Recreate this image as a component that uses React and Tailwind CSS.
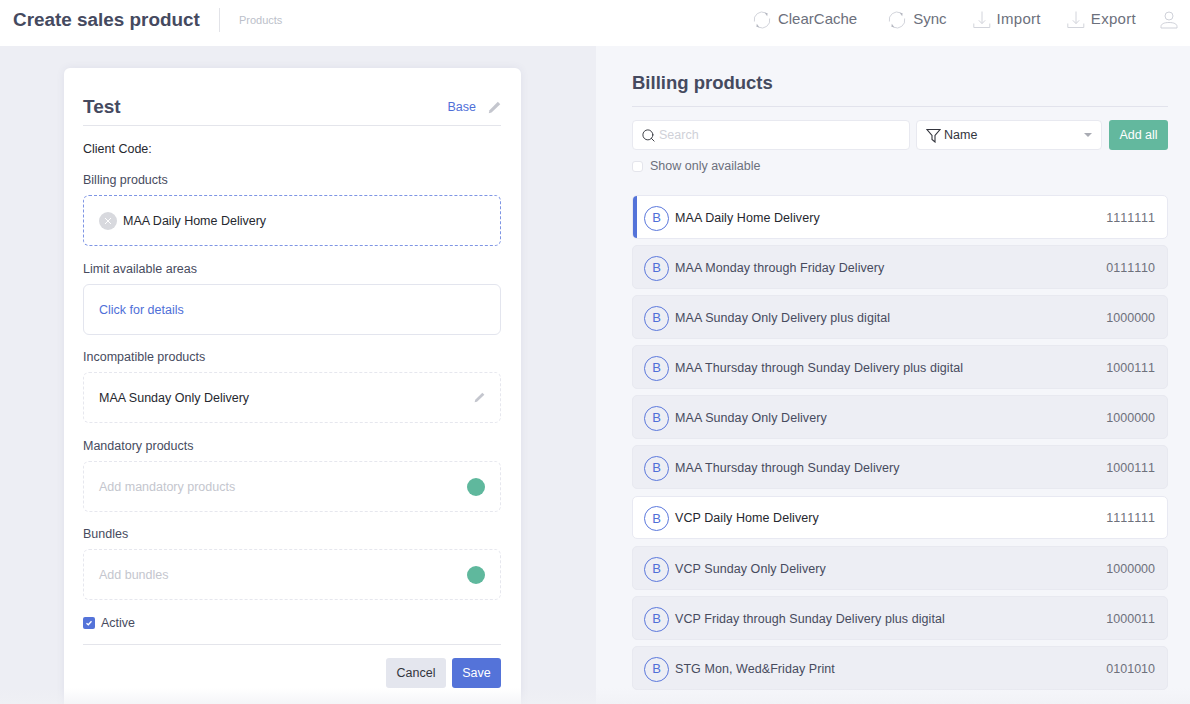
import { Search } from 'lucide-react';

const products = [
  { name: 'MAA Daily Home Delivery', code: '1111111', selected: true, white: true },
  { name: 'MAA Monday through Friday Delivery', code: '0111110' },
  { name: 'MAA Sunday Only Delivery plus digital', code: '1000000' },
  { name: 'MAA Thursday through Sunday Delivery plus digital', code: '1000111' },
  { name: 'MAA Sunday Only Delivery', code: '1000000' },
  { name: 'MAA Thursday through Sunday Delivery', code: '1000111' },
  { name: 'VCP Daily Home Delivery', code: '1111111', white: true, size: 'mt-[1px] h-[43px]' },
  { name: 'VCP Sunday Only Delivery', code: '1000000', size: 'mt-[1px] h-[44px]' },
  { name: 'VCP Friday through Sunday Delivery plus digital', code: '1000011' },
  { name: 'STG Mon, Wed&Friday Print', code: '0101010' },
];

function SyncIcon() {
  return (
    <svg width="18" height="18" viewBox="0 0 18 18" fill="none" stroke="#d2d4db" strokeWidth="1">
      <path d="M12.6 1.9A7.8 7.8 0 0 0 1.4 10.5" />
      <path d="M5.4 16.1A7.8 7.8 0 0 0 16.6 7.5" />
      <path d="M11.5 1.5 14.6 2.2 14.2 5.3Z" fill="#b4b7c0" stroke="none" />
      <path d="M6.5 16.5 3.4 15.8 3.8 12.7Z" fill="#b4b7c0" stroke="none" />
    </svg>
  );
}

function DownIcon() {
  return (
    <svg width="18" height="18" viewBox="0 0 18 18" fill="none" stroke="#d2d4db" strokeWidth="1">
      <path d="M9 0.5V12.5M5.8 9.3 9 12.6 12.2 9.3" />
      <path d="M0.8 12.5V16.5H16.8V12.5" />
    </svg>
  );
}

function UserIcon() {
  return (
    <svg width="18" height="18" viewBox="0 0 18 18" fill="none" stroke="#cfd1d9" strokeWidth="1">
      <circle cx="9" cy="5" r="4" />
      <path d="M1 17V15.5C1 13 4 11.5 9 11.5S17 13 17 15.5V17Z" />
    </svg>
  );
}

function Pencil({ color, size }) {
  return (
    <svg width={size} height={size} viewBox="0 0 14 14" fill={color}>
      <path d="M10.6 0.8 13.2 3.4 3.8 12.4 0.8 13.2 1.6 10Z" />
    </svg>
  );
}

function HeaderAction({ icon, label, wide, className }) {
  return (
    <div className={`flex items-center ${wide ? 'gap-[6px]' : 'gap-[7px]'} ${className}`}>
      {icon}
      <span className={`text-[15px] text-[#6c707c] -translate-y-px ${wide ? 'tracking-[0.3px]' : ''}`}>{label}</span>
    </div>
  );
}

function Field({ label, children, dashed, active, mt }) {
  return (
    <>
      <div className={`h-[20px] ${mt} mb-[5px] text-[12.5px] leading-[20px] text-[#474b5e]`}>{label}</div>
      <div className={`h-[51px] rounded-[6px] px-[15px] flex items-center justify-between text-[12.5px]
        ${active ? 'border border-dashed border-[#7e95e4]' : dashed ? 'border border-dashed border-[#e6e7ee]' : 'border border-[#e3e5ee]'}`}>
        {children}
      </div>
    </>
  );
}

function ProductRow({ p }) {
  return (
    <div className={`relative ${p.size ?? 'h-[44px]'} shrink-0 rounded-[5px] border flex items-center overflow-hidden pl-[11px] pr-[12px] pt-[2px]
      ${p.white ? 'bg-white border-[#e8e9f2]' : 'bg-[#edeef4] border-[#e8e9f0]'}`}>
      {p.selected && <div className="absolute left-0 top-0 bottom-0 w-[4px] bg-[#5473d9]" />}
      <div className="w-[25px] h-[25px] rounded-full border border-[#5b78dc] flex items-center justify-center text-[13px] text-[#4f6fd8]">B</div>
      <span className={`ml-[6px] text-[12.5px] tracking-[0.07px] ${p.white ? 'text-[#26282f]' : 'text-[#474b5e]'}`}>{p.name}</span>
      <span className="ml-auto text-[12.5px] text-[#6e717c] [font-kerning:none]">{p.code}</span>
    </div>
  );
}

export default function App() {
  return (
    <div className="relative w-[1190px] h-[704px] overflow-hidden flex flex-col bg-white font-['Liberation_Sans',sans-serif]">
      {/* Top bar */}
      <header className="h-[46px] shrink-0 bg-white flex items-center pl-[13px] pr-[12px] pb-[6px]">
        <h1 className="text-[18.9px] font-bold text-[#454a5f]">Create sales product</h1>
        <div className="w-px h-[24px] bg-[#e2e3e8] ml-[19px] mr-[19px]" />
        <span className="text-[11px] text-[#bcbfca]">Products</span>
        <div className="ml-auto flex items-center">
          <HeaderAction icon={<SyncIcon />} label="ClearCache" />
          <HeaderAction icon={<SyncIcon />} label="Sync" className="ml-[31px]" />
          <HeaderAction icon={<DownIcon />} label="Import" wide className="ml-[26px]" />
          <HeaderAction icon={<DownIcon />} label="Export" wide className="ml-[26px]" />
          <div className="ml-[24px] flex"><UserIcon /></div>
        </div>
      </header>

      <div className="flex flex-1 min-h-0">
        {/* Left pane */}
        <div className="w-[596px] shrink-0 bg-[#edeef4] pl-[64px] pt-[22px]">
          <div className="w-[457px] h-[700px] bg-white rounded-t-[6px] pl-[19px] pr-[20px] pt-[27px] shadow-[0_0_8px_rgba(60,70,110,0.08)]">
            <div className="flex items-center justify-between h-[24px] mb-[6px]">
              <h2 className="text-[19px] font-bold text-[#454a5f]">Test</h2>
              <div className="flex items-center gap-[12px]">
                <span className="text-[12.5px] text-[#4f6fd8]">Base</span>
                <Pencil color="#c4c6ce" size={13} />
              </div>
            </div>
            <div className="h-px bg-[#e4e5eb]" />
            <div className="mt-[13px] h-[20px] text-[12.5px] leading-[20px] text-[#26282f]">Client Code:</div>

            <Field label="Billing products" active mt="mt-[11px]">
              <div className="flex items-center gap-[6px]">
                <div className="w-[18px] h-[18px] rounded-full bg-[#d8d9de] flex items-center justify-center">
                  <svg width="8" height="8" viewBox="0 0 8 8" stroke="#fff" strokeWidth="1"><path d="M1 1 7 7M7 1 1 7" /></svg>
                </div>
                <span className="pt-[2px] text-[#26282f]">MAA Daily Home Delivery</span>
              </div>
            </Field>

            <Field label="Limit available areas" mt="mt-[13px]">
              <span className="pt-[2px] text-[#4f6fd8]">Click for details</span>
            </Field>

            <Field label="Incompatible products" dashed mt="mt-[12px]">
              <span className="pt-[2px] text-[#26282f]">MAA Sunday Only Delivery</span>
              <Pencil color="#c4c6ce" size={11} />
            </Field>

            <Field label="Mandatory products" dashed mt="mt-[13px]">
              <span className="pt-[2px] text-[#c4c6ce]">Add mandatory products</span>
              <div className="w-[18px] h-[18px] rounded-full bg-[#5fb89d]" />
            </Field>

            <Field label="Bundles" dashed mt="mt-[12px]">
              <span className="pt-[2px] text-[#c4c6ce]">Add bundles</span>
              <div className="w-[18px] h-[18px] rounded-full bg-[#5fb89d]" />
            </Field>

            <div className="mt-[13px] h-[20px] flex items-center gap-[6px] text-[12.5px] text-[#474b5e]">
              <div className="w-[12px] h-[12px] rounded-[2px] bg-[#5473d9] flex items-center justify-center">
                <svg width="8" height="8" viewBox="0 0 8 8" fill="none" stroke="#fff" strokeWidth="1.3"><path d="M1.5 4.2 3.3 5.8 6.5 2.2" /></svg>
              </div>
              Active
            </div>

            <div className="mt-[11px] h-px bg-[#e4e5eb]" />
            <div className="mt-[13px] flex justify-end gap-[6px]">
              <button className="w-[60px] h-[30px] rounded-[3px] bg-[#e4e6ee] text-[12.5px] text-[#33353d]">Cancel</button>
              <button className="w-[49px] h-[30px] rounded-[3px] bg-[#5473d9] text-[12.5px] text-white">Save</button>
            </div>
          </div>
        </div>

        {/* Right pane */}
        <div className="flex-1 min-w-0 bg-[#f5f6fa] pl-[36px] pr-[22px] pt-[24px] flex flex-col">
          <h2 className="h-[26px] text-[18.5px] leading-[26px] font-bold text-[#454a5f]">Billing products</h2>
          <div className="mt-[10px] h-px bg-[#e2e3ec] shrink-0" />
          <div className="mt-[13px] flex gap-[6px]">
            <div className="w-[278px] h-[30px] rounded-[4px] bg-white border border-[#e8e9f0] flex items-center pl-[8px] gap-[3px]">
              <Search size={15} strokeWidth={1.5} className="text-[#33353d]" />
              <span className="text-[12.5px] text-[#cfd1d8]">Search</span>
            </div>
            <div className="w-[186px] h-[30px] rounded-[4px] bg-white border border-[#e8e9f0] flex items-center pl-[9px] pr-[9px] gap-[3px]">
              <svg width="15" height="15" viewBox="0 0 15 15" fill="none" stroke="#33353d" strokeWidth="1.1">
                <path d="M1 1.5H14L9 7.5V14L6 11.5V7.5Z" />
              </svg>
              <span className="text-[12.5px] text-[#33353d]">Name</span>
              <div className="ml-auto w-0 h-0 border-x-[4px] border-x-transparent border-t-[4px] border-t-[#a9abb3]" />
            </div>
            <button className="w-[59px] h-[30px] ml-px rounded-[3px] bg-[#63b89e] text-[12.5px] text-white">Add all</button>
          </div>
          <div className="mt-[6px] h-[20px] flex items-center gap-[7px] text-[12.5px] text-[#6c707c]">
            <div className="w-[11px] h-[11px] rounded-[3px] bg-white border border-[#e4e5ec]" />
            Show only available
          </div>
          <div className="mt-[19px] flex flex-col gap-[6px]">
            {products.map((p, i) => <ProductRow key={i} p={p} />)}
          </div>
        </div>
      </div>

      {/* Bottom fade */}
      <div className="absolute left-0 right-0 bottom-0 h-[16px] bg-gradient-to-b from-transparent to-[#f0f1f5]/70 pointer-events-none" />
    </div>
  );
}
